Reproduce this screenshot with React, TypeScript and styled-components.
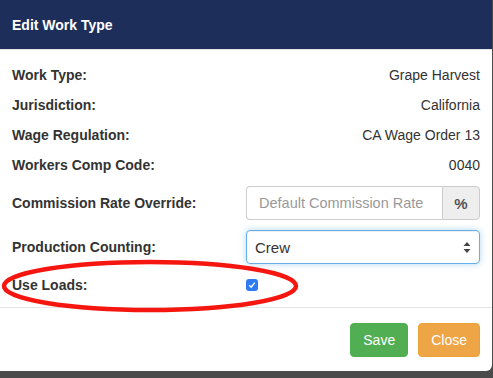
import React from "react";
import styled, { createGlobalStyle } from "styled-components";

const GlobalStyle = createGlobalStyle`
  html, body {
    margin: 0;
    padding: 0;
    background: #4b4b4b;
    font-family: "Liberation Sans", Arial, sans-serif;
    font-size: 14px;
    color: #333;
  }
`;

const Modal = styled.div`
  position: relative;
  width: 492px;
  background: #fff;
  border-radius: 0 0 6px 0;
  overflow: hidden;
`;

const Header = styled.div`
  height: 49px;
  background: #1e2e5a;
  border-bottom: 1px solid #e5e5e5;
  display: flex;
  align-items: center;
  padding: 0 12px;
  box-sizing: content-box;
`;

const Title = styled.h4`
  margin: 0;
  color: #fff;
  font-size: 14px;
  font-weight: bold;
  padding-top: 1px;
`;

const Body = styled.div`
  display: grid;
  grid-template-columns: 222px minmax(0, 1fr);
  column-gap: 12px;
  padding: 10px 12px 7px;
`;

const Label = styled.div<{ $h?: number; $mt?: number }>`
  height: ${(p) => p.$h ?? 30}px;
  display: flex;
  align-items: center;
  font-weight: bold;
  margin-top: ${(p) => p.$mt ?? 0}px;
`;

const Value = styled.div`
  height: 30px;
  display: flex;
  align-items: center;
  justify-content: flex-end;
`;

const Field = styled.div<{ $mt: number }>`
  height: 34px;
  margin-top: ${(p) => p.$mt}px;
  display: flex;
  align-items: center;
  min-width: 0;
`;

const InputGroup = styled.div`
  display: flex;
  width: 100%;
  height: 34px;
`;

const TextInput = styled.input`
  flex: 1;
  min-width: 0;
  height: 34px;
  box-sizing: border-box;
  border: 1px solid #ccc;
  border-right: none;
  border-radius: 4px 0 0 4px;
  padding: 6px 12px;
  font-family: inherit;
  font-size: 14.5px;
  color: #555;
  outline: none;
  &::placeholder {
    color: #999;
  }
`;

const Addon = styled.span`
  width: 38px;
  box-sizing: border-box;
  display: flex;
  align-items: center;
  justify-content: center;
  background: #eee;
  border: 1px solid #ccc;
  border-radius: 0 4px 4px 0;
  font-weight: bold;
  font-size: 15px;
  color: #555;
`;

const SelectBox = styled.div`
  width: 100%;
  height: 34px;
  box-sizing: border-box;
  border: 1px solid #66afe9;
  border-radius: 4px;
  box-shadow: inset 0 1px 1px rgba(0, 0, 0, 0.075), 0 0 6px rgba(102, 175, 233, 0.5);
  display: flex;
  align-items: center;
  justify-content: space-between;
  padding: 0 8px;
  font-size: 15px;
  color: #333;
`;

const CheckCell = styled.div`
  height: 30px;
  margin-top: 6px;
  display: flex;
  align-items: center;
`;

const Check = styled.span`
  width: 12px;
  height: 12px;
  border-radius: 3px;
  background: #2f7bf5;
  display: flex;
  align-items: center;
  justify-content: center;
`;

const Footer = styled.div`
  border-top: 1px solid #e5e5e5;
  padding: 15px 12px 14px;
  display: flex;
  justify-content: flex-end;
  gap: 10px;
`;

const Button = styled.button<{ $bg: string; $border: string }>`
  height: 34px;
  padding: 6px 12px;
  font-family: inherit;
  font-size: 14px;
  color: #fff;
  background: ${(p) => p.$bg};
  border: 1px solid ${(p) => p.$border};
  border-radius: 4px;
`;

const Annotation = styled.svg`
  position: absolute;
  left: 0;
  top: 0;
  pointer-events: none;
`;

const rows: [string, string][] = [
  ["Work Type:", "Grape Harvest"],
  ["Jurisdiction:", "California"],
  ["Wage Regulation:", "CA Wage Order 13"],
  ["Workers Comp Code:", "0040"],
];

export default function App() {
  return (
    <>
      <GlobalStyle />
      <Modal>
        <Header>
          <Title>Edit Work Type</Title>
        </Header>
        <Body>
          {rows.map(([l, v]) => (
            <React.Fragment key={l}>
              <Label>{l}</Label>
              <Value>{v}</Value>
            </React.Fragment>
          ))}
          <Label $h={34} $mt={6}>Commission Rate Override:</Label>
          <Field $mt={6}>
            <InputGroup>
              <TextInput placeholder="Default Commission Rate" />
              <Addon>%</Addon>
            </InputGroup>
          </Field>
          <Label $h={34} $mt={10}>Production Counting:</Label>
          <Field $mt={10}>
            <SelectBox>
              <span>Crew</span>
              <svg width="8" height="13" viewBox="0 0 8 13">
                <path d="M4 1 L7.5 5 L0.5 5 Z" fill="#444" />
                <path d="M4 12 L7.5 8 L0.5 8 Z" fill="#444" />
              </svg>
            </SelectBox>
          </Field>
          <Label $mt={6}>Use Loads:</Label>
          <CheckCell>
            <Check>
              <svg width="8" height="8" viewBox="0 0 8 8">
                <path d="M1.2 4.2 L3.2 6.2 L6.8 1.6" stroke="#fff" strokeWidth="1.4" fill="none" />
              </svg>
            </Check>
          </CheckCell>
        </Body>
        <Footer>
          <Button $bg="#52ae52" $border="#4cae4c">Save</Button>
          <Button $bg="#eea546" $border="#eea236">Close</Button>
        </Footer>
        <Annotation width="320" height="330">
          <ellipse cx="150" cy="286" rx="146" ry="24" fill="none" stroke="#f5170f" strokeWidth="4.5" />
        </Annotation>
      </Modal>
    </>
  );
}
